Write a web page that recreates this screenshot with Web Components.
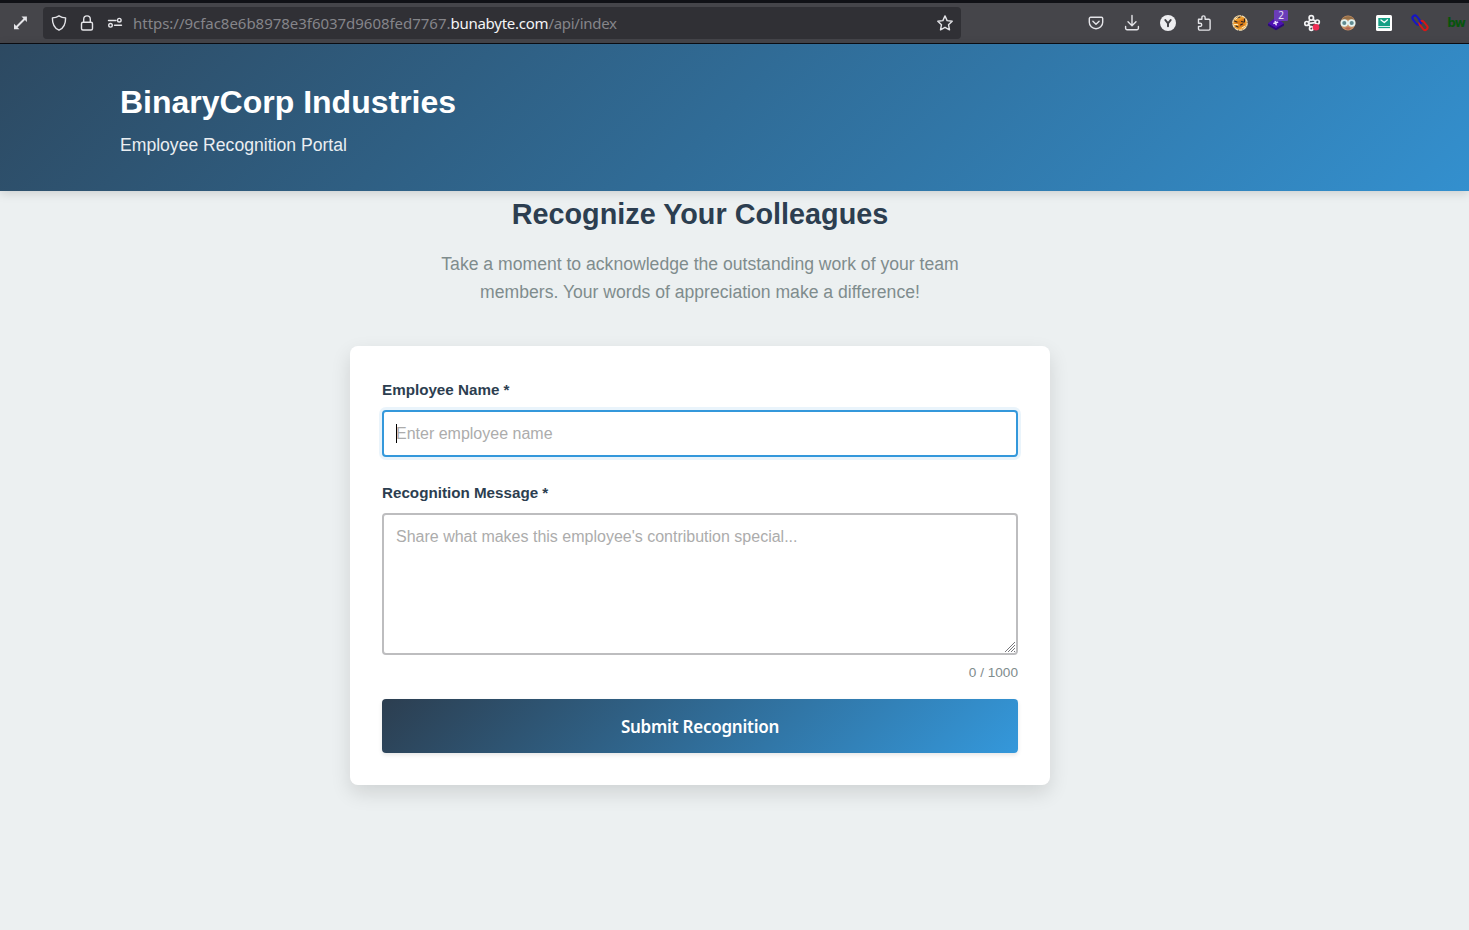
<!DOCTYPE html>
<html lang="en">
<head>
<meta charset="utf-8">
<title>BinaryCorp Industries</title>
<style>
  body {
    margin: 0;
    height: 930px;
    overflow: hidden;
    background: #ecf0f1;
    font-family: "Liberation Sans", Arial, sans-serif;
    color: #2c3e50;
  }
</style>
</head>
<body>
<browser-bar></browser-bar>
<portal-header>
  <span slot="title">BinaryCorp Industries</span>
  <span slot="tagline">Employee Recognition Portal</span>
</portal-header>
<portal-intro>
  <span slot="title">Recognize Your Colleagues</span>
  Take a moment to acknowledge the outstanding work of your team members. Your words of appreciation make a difference!
</portal-intro>
<recognition-form></recognition-form>

<script>
// Small base class: every component only has to supply its markup
class PortalElement extends HTMLElement {
  constructor() {
    super();
    this.attachShadow({ mode: 'open' });
  }

  connectedCallback() {
    this.shadowRoot.innerHTML = this.template();
  }
}

// Icons are drawn on a 16x16 grid
const ICONS = {
  expand: '<path d="M3.5 12 11.500 4" stroke-width="2"/><path d="M8.500 1.600h5.400V7zM1 8.800v5.400h5.400z" fill="currentColor" stroke="none"/>',
  shield: '<path d="M8 .8c2 1.300 4.200 2 6.600 2.100.1 5.500-1.500 10-6.600 12.300C2.900 12.900 1.300 8.400 1.400 2.900 3.800 2.800 6 2.100 8 .8z"/>',
  lock: '<rect x="2.500" y="7.300" width="11" height="7.700" rx="1.500"/><path d="M4.700 7.300V4.200a3.300 3.300 0 0 1 6.600 0v3.100"/>',
  settings: '<path d="M1.500 5.500h7.500M7.500 10.300h7"/><circle cx="12.300" cy="5.200" r="1.800"/><circle cx="3.500" cy="10.300" r="1.800"/>',
  star: '<path d="M8 .9l2.100 4.700 5.100.6-3.700 3.500 1 5.100L8 12.300l-4.500 2.500 1-5.100L.8 6.200l5.100-.6z"/>',
  pocket: '<path d="M2.600 2.300h10.800a1.300 1.300 0 0 1 1.300 1.300v3.600a6.700 6.500 0 0 1-13.400 0V3.600a1.300 1.300 0 0 1 1.300-1.300z"/><path d="M4.900 6.200 8 9.200l3.100-3"/>',
  download: '<path d="M8 .4v10.200M4 6.800l4 4 4-4M1.600 11.500v1.700A1.500 1.500 0 0 0 3.100 14.700h9.800a1.500 1.500 0 0 0 1.500-1.500v-1.700"/>',
  account: '<circle cx="8" cy="8" r="8" fill="#ededf0" stroke="none"/><path d="M5.300 5 8 8.400l2.700-3.400M8 8.400v2.900" stroke="#424247" stroke-width="2"/>',
  puzzle: '<path d="M2.500 4.300h3.400V2.500a1.600 1.600 0 0 1 3.200 0v1.800h3.700a1.300 1.300 0 0 1 1.300 1.300v8.200a1.300 1.300 0 0 1-1.300 1.300H3.800a1.300 1.300 0 0 1-1.300-1.300v-2.400h1.600a1.600 1.600 0 0 0 0-3.200H2.500z"/>',
  fox: '<circle cx="8" cy="8" r="7.200" fill="#ec9b2d" stroke="#f3dfb5" stroke-width="1.200" stroke-dasharray="3 1.500"/><path d="M2 8l4-2 7-3-1 4 1 4-4 1-3 1 1-4z" fill="#d87a18" stroke="none"/><path d="M2.500 6 5 7M9.500 6.500l2 .5M4 11l2 1M8.500 10l2-1M5 3l3-1M12.500 4v3" stroke="#2a2424" stroke-width="1.100"/><path d="M3 4.500l3-2M10 13l3-2M2.500 9.500h3" stroke="#fff0c5" stroke-width="1"/>',
  diamond: '<path d="M0 8.500 8 2l8 6.500L8 14z" fill="#4d10b3" stroke="none"/><path d="M0 8.500 8 13l8-4.500v2L8 15.300 0 10.500z" fill="#2c087e" stroke="none"/><path d="M6 8.300l3.500-1M7.300 6.600l.8 3" stroke="#e9ddff" stroke-width="1.700"/>',
  nodes: '<path d="M9 4.500l2.500 1.800M11 7.700 5.500 8.300M4.500 9.500l2 2.500M6 5l-1.500 2" stroke="#f4f4f6" stroke-width="1.700"/><circle cx="7.300" cy="2.900" r="2.200" stroke="#f4f4f6" stroke-width="1.700"/><circle cx="2.800" cy="8.500" r="2" stroke="#f4f4f6" stroke-width="1.700"/><circle cx="13.300" cy="7" r="2" stroke="#f4f4f6" stroke-width="1.700"/><circle cx="7.300" cy="13.500" r="1.800" stroke="#f4f4f6" stroke-width="1.700"/><circle cx="12" cy="12.200" r="3.300" fill="#ef2d55" stroke="none"/>',
  glasses: '<circle cx="8" cy="8" r="7.500" fill="#c79268" stroke="none"/><path d="M1 6a7.500 7.500 0 0 1 14 0c-4-2-10-2-14 0z" fill="#967047" stroke="none"/><path d="M5 13.300q3-2 6 0-3 3-6 0z" fill="#b26554" stroke="none"/><circle cx="4.300" cy="8" r="2.900" fill="#5f8a90" stroke="#e3f3f2" stroke-width="1.700"/><circle cx="11.700" cy="8" r="2.900" fill="#5f8a90" stroke="#e3f3f2" stroke-width="1.700"/>',
  mail: '<rect width="16" height="16" rx="1.500" fill="#fff" stroke="none"/><rect x="2.300" y="3" width="11.700" height="8" fill="#16a085" stroke="none"/><path d="M5 5 8.300 7.500l3.200-2.700" stroke="#fff" stroke-width="1.300"/><path d="M2.300 12.500h11.700" stroke="#16a085" stroke-width="1.300" stroke-linecap="butt"/>',
  chain: '<rect x="-.5" y="2.500" width="10" height="5" rx="2.500" transform="rotate(52 4.500 5)" stroke="#1515c8" stroke-width="2"/><rect x="6.500" y="8" width="10" height="5" rx="2.500" transform="rotate(52 11.500 10.500)" stroke="#d91616" stroke-width="2"/><path d="M7.500 6l1.500 2.300" stroke="#1515c8" stroke-width="2"/>'
};

// <ui-icon name="lock" size="18">
class UiIcon extends PortalElement {
  template() {
    const size = this.getAttribute('size') || 16;
    return `
      <style>
        :host { display: block; flex: none; width: ${size}px; height: ${size}px; }
        svg { display: block; overflow: visible; }
      </style>
      <svg width="${size}" height="${size}" viewBox="0 0 16 16" fill="none" stroke="currentColor"
        stroke-width="1.4" stroke-linecap="round" stroke-linejoin="round">${ICONS[this.getAttribute('name')]}</svg>
    `;
  }
}

// Toolbar slot for one extension, with optional badge text
class ToolbarButton extends PortalElement {
  template() {
    const badge = this.getAttribute('badge');
    return `
      <style>
        :host {
          position: relative;
          display: flex;
          flex: none;
          width: 36px;
          height: 36px;
          align-items: center;
          justify-content: center;
        }
        .badge {
          position: absolute;
          top: 5px;
          left: 16px;
          width: 14px;
          height: 11px;
          background: #6a3db8;
          border-radius: 1px;
          color: #e9e2f5;
          font: 10px/11px "Noto Sans", sans-serif;
          text-align: center;
        }
      </style>
      <slot></slot>
      ${badge ? `<span class="badge">${badge}</span>` : ''}
    `;
  }
}

class BrowserBar extends PortalElement {
  template() {
    const tools = ['pocket', 'download', 'account', 'puzzle', 'fox', 'diamond', 'nodes', 'glasses', 'mail', 'chain'];
    return `
      <style>
        :host {
          display: flex;
          box-sizing: border-box;
          height: 44px;
          border-top: 3px solid #101116;
          border-bottom: 1px solid #0c0d12;
          align-items: center;
          background: #45454a;
          color: #e4e4e8;
          overflow: hidden;
          font-family: "Noto Sans", sans-serif;
        }
        .expand { margin: 0 14px 0 13px; }
        .address {
          display: flex;
          flex: none;
          box-sizing: border-box;
          width: 918px;
          height: 32px;
          padding: 0 8px;
          align-items: center;
          gap: 12px;
          background: #303035;
          border-radius: 4px;
        }
        .url {
          flex: 1;
          margin-left: -2px;
          font-size: 15px;
          letter-spacing: -0.03px;
          color: #85858a;
          white-space: nowrap;
        }
        .url b { font-weight: 400; letter-spacing: -0.25px; color: #f4f4f6; }
        .path { letter-spacing: -0.28px; }
        .tools { display: flex; margin-left: 117px; }
        .bw {
          color: #07540c;
          font: 700 12px/16px "DejaVu Sans", sans-serif;
          letter-spacing: -1px;
        }
      </style>
      <ui-icon class="expand" name="expand"></ui-icon>
      <div class="address">
        <ui-icon name="shield"></ui-icon>
        <ui-icon name="lock"></ui-icon>
        <ui-icon name="settings"></ui-icon>
        <span class="url">https://9cfac8e6b8978e3f6037d9608fed7767.<b>bunabyte.com</b><span class="path">/api/index</span></span>
        <ui-icon name="star"></ui-icon>
      </div>
      <div class="tools">
        ${tools.map(name => `<toolbar-button${name === 'diamond' ? ' badge="2"' : ''}><ui-icon name="${name}"></ui-icon></toolbar-button>`).join('')}
        <toolbar-button><span class="bw">bw</span></toolbar-button>
      </div>
    `;
  }
}

class PortalHeader extends PortalElement {
  template() {
    // The gradient spans a full 1920px desktop, wider than the visible area
    return `
      <style>
        :host {
          display: block;
          box-sizing: border-box;
          height: 147px;
          padding: 33px 120px;
          background: linear-gradient(135deg, #2c3e50 0%, #3498db 100%) -260px 0 / 1920px 147px;
          box-shadow: 0 2px 10px rgba(0, 0, 0, 0.15);
          color: #fff;
        }
        h1 { margin: 0 0 3px; font-size: 32px; line-height: 51px; }
        p { margin: 0; font-size: 17.6px; line-height: 28px; opacity: 0.9; }
      </style>
      <h1><slot name="title"></slot></h1>
      <p><slot name="tagline"></slot></p>
    `;
  }
}

class PortalIntro extends PortalElement {
  template() {
    return `
      <style>
        :host { display: block; width: 600px; margin: 0 0 40px 400px; text-align: center; }
        h2 { margin: 0 0 13px; font-size: 28.8px; line-height: 46px; }
        p { width: 560px; margin: 0 auto; color: #7f8c8d; font-size: 17.6px; line-height: 28px; }
      </style>
      <h2><slot name="title"></slot></h2>
      <p><slot></slot></p>
    `;
  }
}

class RecognitionForm extends PortalElement {
  connectedCallback() {
    super.connectedCallback();
    const message = this.shadowRoot.querySelector('textarea');
    const count = this.shadowRoot.querySelector('.count');
    message.addEventListener('input', () => {
      count.textContent = `${message.value.length} / 1000`;
    });
  }

  template() {
    return `
      <style>
        :host {
          display: block;
          box-sizing: border-box;
          width: 700px;
          height: 439px;
          margin-left: 350px;
          padding: 32px;
          background: #fff;
          border-radius: 8px;
          box-shadow: 0 8px 20px rgba(0, 0, 0, 0.12);
        }
        form { display: flex; flex-direction: column; }
        label { margin-bottom: 8px; font-size: 15.2px; font-weight: 700; line-height: 24px; }
        .field { display: flex; position: relative; }
        input, textarea {
          box-sizing: border-box;
          width: 636px;
          margin: 0;
          padding: 12px;
          border: 2px solid #bdbdbf;
          border-radius: 4px;
          outline: none;
          background: #fff;
          font: 16px/18px "Liberation Sans", Arial, sans-serif;
        }
        input { height: 47px; border-color: #3498db; box-shadow: 0 0 0 3px rgba(52, 152, 219, 0.1); }
        textarea { height: 142px; padding-top: 13px; resize: none; }
        ::placeholder { color: #acacac; opacity: 1; }
        .field.name { margin-bottom: 24px; }
        .caret { position: absolute; left: 14px; top: 14px; width: 1px; height: 19px; background: #000; }
        .grip { position: absolute; right: 3px; bottom: 3px; }
        .count { margin: 7px 0 15px; color: #7f8c8d; font-size: 13.6px; line-height: 22px; text-align: right; }
        button {
          height: 54px;
          padding: 1px 0 0;
          border: 0;
          border-radius: 4px;
          background: linear-gradient(135deg, #2c3e50 0%, #3498db 100%);
          box-shadow: 0 2px 4px rgba(0, 0, 0, 0.1);
          color: #fff;
          font: 600 17px/24px "Noto Sans", sans-serif;
          letter-spacing: -0.24px;
        }
      </style>
      <form>
        <label for="name">Employee Name *</label>
        <div class="field name">
          <input id="name" placeholder="Enter employee name">
          <span class="caret"></span>
        </div>
        <label for="message">Recognition Message *</label>
        <div class="field">
          <textarea id="message" maxlength="1000" placeholder="Share what makes this employee's contribution special..."></textarea>
          <svg class="grip" width="10" height="10" stroke="#77777b" stroke-width="1"><path d="M0 10 10 0M3 10l7-7M6 10l4-4M9 10l1-1"/></svg>
        </div>
        <div class="count">0 / 1000</div>
        <button type="button">Submit Recognition</button>
      </form>
    `;
  }
}

customElements.define('ui-icon', UiIcon);
customElements.define('toolbar-button', ToolbarButton);
customElements.define('browser-bar', BrowserBar);
customElements.define('portal-header', PortalHeader);
customElements.define('portal-intro', PortalIntro);
customElements.define('recognition-form', RecognitionForm);
</script>
</body>
</html>
